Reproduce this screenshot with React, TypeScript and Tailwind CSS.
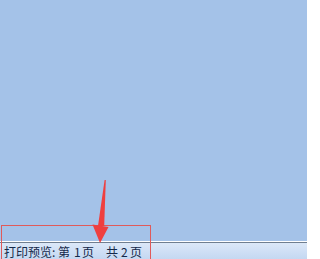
export default function App() {
  return (
    <div className="relative flex h-[259px] w-[307px] flex-col overflow-hidden bg-[#a4c2e8]">
      {/* preview area */}
      <div className="flex-1" />

      {/* status bar */}
      <div className="h-[18px] border-t border-t-white">
        <div className="h-px bg-[#6f7e90]" />
        <div className="flex h-[17px] items-center whitespace-nowrap bg-gradient-to-b from-[#dce8f8] via-[#cfdff5] to-[#c3d7f1] pl-[4px] text-[12px] leading-none text-[#15294a] [font-family:'Noto_Sans_CJK_SC',sans-serif]">
          <span className="w-[54px]">打印预览:</span>
          <span className="w-[16px]">第</span>
          <span className="w-[8px]">1</span>
          <span className="w-[24px]">页</span>
          <span className="w-[15px]">共</span>
          <span className="w-[9px]">2</span>
          <span>页</span>
        </div>
      </div>

      {/* annotation: red frame + arrow */}
      <div className="pointer-events-none absolute left-[1px] top-[225px] h-[40px] w-[150px] border border-[#e05a5a]" />
      <svg className="pointer-events-none absolute left-0 top-0" width="307" height="259" viewBox="0 0 307 259">
        <polygon points="104.6,180 105.8,180 104.2,226 98,226" fill="#ef3f3f" />
        <polygon points="92.5,224.5 108.5,227 100,243" fill="#ef3f3f" />
      </svg>
    </div>
  );
}
